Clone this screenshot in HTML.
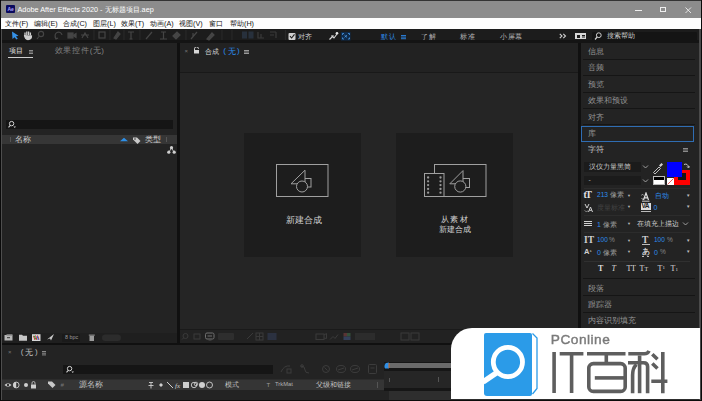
<!DOCTYPE html>
<html><head><meta charset="utf-8">
<style>
*{margin:0;padding:0;box-sizing:border-box}
html,body{width:702px;height:401px;overflow:hidden;background:#101010;font-family:"Liberation Sans",sans-serif;}
.a{position:absolute}
.t{position:absolute;white-space:nowrap;line-height:1}
#title{left:0;top:0;width:702px;height:18px;background:#8c8c8c;border-top:1.5px solid #333}
#menu{left:0;top:18px;width:702px;height:11px;background:#fdfdfd}
#tool{left:2px;top:29px;width:698px;height:14px;background:#1c1c1c}
.panel{position:absolute;background:#232323}
.sep{position:absolute;height:1px;background:#151515}
.ri{position:absolute;left:588px;font-size:7.8px;color:#959595}
</style></head><body>
<!-- window frame -->


<div id="title" class="a">
  <div class="a" style="left:6px;top:4px;width:9px;height:8px;background:#0a0a5e;border-radius:1px"></div>
  <div class="t" style="left:7.5px;top:6px;font-size:5px;color:#b0a8ff;font-weight:bold">Ae</div>
  <div class="t" style="left:17.5px;top:5px;font-size:7.3px;color:#fff">Adobe After Effects 2020 - 无标题项目.aep</div>
  <div class="a" style="left:635px;top:8.5px;width:7px;height:0.9px;background:#eee"></div>
  <div class="a" style="left:660px;top:5.5px;width:6px;height:5.5px;border:0.9px solid #eee"></div>
  <svg class="a" style="left:684.5px;top:5.5px" width="7" height="7"><path d="M0.5 0.5L6 6M6 0.5L0.5 6" stroke="#eee" stroke-width="0.9"/></svg>
</div>
<div id="menu" class="a">
  <div class="t" style="left:5px;top:2px;font-size:7.2px;color:#111">文件(F)</div>
  <div class="t" style="left:34px;top:2px;font-size:7.2px;color:#111">编辑(E)</div>
  <div class="t" style="left:63px;top:2px;font-size:7.2px;color:#111">合成(C)</div>
  <div class="t" style="left:93px;top:2px;font-size:7.2px;color:#111">图层(L)</div>
  <div class="t" style="left:121px;top:2px;font-size:7.2px;color:#111">效果(T)</div>
  <div class="t" style="left:150px;top:2px;font-size:7.2px;color:#111">动画(A)</div>
  <div class="t" style="left:179px;top:2px;font-size:7.2px;color:#111">视图(V)</div>
  <div class="t" style="left:209px;top:2px;font-size:7.2px;color:#111">窗口</div>
  <div class="t" style="left:230px;top:2px;font-size:7.2px;color:#111">帮助(H)</div>
</div>
<div id="tool" class="a"></div>
<div class="a" style="left:2px;top:40px;width:698px;height:3px;background:#141414"></div>
<!-- toolbar icons -->
<svg class="a" style="left:0;top:29px" width="290" height="12">
  <path d="M12 2.5 L12.5 10 L14.5 8.3 L16.5 10.5 L17.8 9.5 L15.8 7.5 L18.5 6.8 Z" fill="#3592e8"/>
  <path d="M25 6 L25 3.5 M26.8 6 L26.8 2.5 M28.6 6 L28.6 2.5 M30.4 6.5 L30.4 3.5 M24.5 6 Q25 10.5 28 10.5 Q31.5 10.5 31.5 6.5" stroke="#cfcfcf" stroke-width="1.3" fill="#cfcfcf"/>
  <g stroke="#454545" fill="none" stroke-width="1.2">
    <circle cx="41" cy="5" r="2.6"/><path d="M39 7.5L37 10"/>
    <path d="M56 9 A3.5 3.5 0 1 1 62 6"/><path d="M55 8l1 2 2-1"/>
    <rect x="68" y="4" width="5" height="5" fill="#454545"/><path d="M73 6.5L76 4.5V8.5Z" fill="#454545"/>
    <path d="M82 9 L85 4 L88 9 M81 6h8"/>
    <path d="M94 1v10" stroke="#282828"/>
    <rect x="99" y="3" width="6" height="6"/>
    <path d="M110 1v10" stroke="#282828"/>
    <path d="M114 9 L118 3 L120 5 L116 10Z" fill="#454545"/>
    <path d="M124 1v10" stroke="#282828"/>
    <path d="M128 3h6 M131 3v7 M129.5 10h3"/>
    <path d="M140 1v10" stroke="#282828"/>
    <path d="M146 10 L152 3"/>
    <path d="M160 10h7 M163.5 3v7 M161 3h5"/>
    <path d="M173 7 L177 3 L180 6 L176 10Z" fill="#454545"/>
    <path d="M186 1v10" stroke="#282828"/>
    <path d="M191 10 L197 3 M193 4v3"/>
    <path d="M207 10 L212 4 L214 6 L209 11Z" fill="#454545"/>
    <path d="M222 1v10" stroke="#282828"/>
    <path d="M232 1v10" stroke="#282828"/>
    <rect x="242" y="2.5" width="5" height="7" fill="#27303c" stroke="none"/><rect x="248.5" y="2.5" width="5" height="7" fill="#27303c" stroke="none"/>
    <path d="M258 3v6h6M261 5v4" stroke="#3a3a3a"/>
    <path d="M270 3h6M276 3v6M270 6h4" stroke="#3a3a3a"/>
    <path d="M285.5 1v10" stroke="#282828"/>
  </g>
</svg>
<svg class="a" style="left:286px;top:29px" width="70" height="12">
  <rect x="2.5" y="4" width="7" height="7" rx="1" fill="#d0d0d0"/>
  <path d="M4 7.2 L5.6 9 L8.5 5.3" stroke="#1c1c1c" stroke-width="1.1" fill="none"/>
  <path d="M43.5 10.5 L47.5 6.5 M45.5 6.5 L48 9 L51 5" stroke="#d8d8d8" stroke-width="1.1" fill="none"/><circle cx="51" cy="4.3" r="1.3" fill="#e8e8e8"/>
  <rect x="55" y="3" width="9.5" height="8.5" fill="#0f2a4a"/>
  <path d="M56.5 6V4.5H58M62 4.5h1.5V6M56.5 8.5V10H58M62 10h1.5V8.5M58.5 6.2l2.5 2.2M61 6.2l-2.5 2.2" fill="none" stroke="#4a9ae8" stroke-width="0.8"/>
</svg>
<div class="t" style="left:297.5px;top:33px;font-size:7.4px;color:#c8c8c8">对齐</div>
<div class="t" style="left:381px;top:32.5px;font-size:7.3px;color:#2d8ceb;letter-spacing:1.3px">默认</div>
<div class="a" style="left:401px;top:34.5px;width:5px;height:0.9px;background:#2a7ad0;box-shadow:0 1.6px 0 #2a7ad0,0 3.2px 0 #2a7ad0"></div>
<div class="t" style="left:420.5px;top:32.5px;font-size:7.4px;color:#b4b4b4;letter-spacing:1.3px">了解</div>
<div class="t" style="left:460px;top:32.5px;font-size:7.4px;color:#b4b4b4;letter-spacing:1.3px">标准</div>
<div class="t" style="left:500px;top:32.5px;font-size:7.4px;color:#b4b4b4;letter-spacing:0.6px">小屏幕</div>
<svg class="a" style="left:559px;top:33px" width="8" height="6"><path d="M0.8 0.8L3 3L0.8 5.2M4.3 0.8L6.5 3L4.3 5.2" stroke="#d0d0d0" stroke-width="1.1" fill="none"/></svg>
<div class="a" style="left:575px;top:33px;width:11px;height:6px;background:#d8d8d8"></div>
<div class="a" style="left:577px;top:34.5px;width:3px;height:3px;background:#1c1c1c"></div>
<div class="a" style="left:582px;top:35px;width:3px;height:1px;background:#1c1c1c;box-shadow:0 1.5px 0 #1c1c1c"></div>
<div class="a" style="left:592px;top:31.5px;width:105px;height:9px;background:#141414;border-radius:1px"></div>
<svg class="a" style="left:593px;top:31px" width="10" height="10"><circle cx="5.8" cy="4.2" r="2.4" stroke="#cfcfcf" stroke-width="1" fill="none"/><path d="M4.2 6L2 8.5" stroke="#cfcfcf" stroke-width="1.2"/></svg>
<div class="t" style="left:607px;top:32.5px;font-size:6.6px;color:#cfcfcf">搜索帮助</div>


<!-- project panel -->
<div class="panel" style="left:2px;top:43px;width:175px;height:300px;background:#232323"></div>
<div class="t" style="left:9.3px;top:46.8px;font-size:7.4px;color:#e0e0e0;letter-spacing:0.2px">项目</div>
<div class="a" style="left:29px;top:49.5px;width:4px;height:1px;background:#8a8a8a;box-shadow:0 1.5px 0 #8a8a8a,0 3px 0 #8a8a8a"></div>
<div class="a" style="left:8px;top:56.5px;width:25px;height:1.2px;background:#cfcfcf"></div>
<div class="t" style="left:54.5px;top:47.3px;font-size:7.5px;color:#808080;letter-spacing:0.85px">效果控件</div><div class="t" style="left:89.7px;top:47px;font-size:8px;color:#808080">(</div><div class="t" style="left:93px;top:47.3px;font-size:7.5px;color:#808080">无</div><div class="t" style="left:101.3px;top:47px;font-size:8px;color:#808080">)</div>
<div class="a" style="left:6px;top:119.7px;width:167px;height:9px;background:#151515"></div>
<svg class="a" style="left:7px;top:120px" width="10" height="9"><circle cx="4.6" cy="3.6" r="2.2" stroke="#d0d0d0" stroke-width="1" fill="none"/><path d="M3.3 5.3L1.5 7.3" stroke="#d0d0d0" stroke-width="1.1"/><path d="M6.5 6.6h2.5l-1.25 1.3z" fill="#d0d0d0"/></svg>
<div class="a" style="left:2px;top:135px;width:175px;height:9px;background:#363636"></div>
<div class="t" style="left:15px;top:136px;font-size:7.6px;color:#d0d0d0">名称</div>
<div class="a" style="left:10px;top:137px;width:1px;height:5px;background:#555"></div>
<svg class="a" style="left:119px;top:136px" width="50" height="8"><path d="M1 5.3 L5 1.8 L9 5.3 Z" fill="#2e8fe6"/><path d="M14 1.5 L18 1.5 L21.5 5 L18.5 8 L14 3.5Z" fill="#c9c9c9"/><circle cx="16" cy="3" r="0.8" fill="#363636"/></svg>
<div class="t" style="left:144.5px;top:136px;font-size:7.6px;color:#d0d0d0">类型</div>
<div class="a" style="left:165.5px;top:137px;width:1px;height:5px;background:#555"></div>
<svg class="a" style="left:167px;top:146px" width="9" height="8"><circle cx="4.5" cy="1.7" r="1.6" fill="#cfcfcf"/><circle cx="1.8" cy="6.2" r="1.6" fill="#cfcfcf"/><circle cx="7.2" cy="6.2" r="1.6" fill="#cfcfcf"/><path d="M4.5 2L2 6M4.5 2L7 6" stroke="#cfcfcf" stroke-width="0.8"/></svg>
<!-- project bottom bar -->
<div class="a" style="left:2px;top:332.5px;width:175px;height:10px;background:#1f1f1f"></div>
<svg class="a" style="left:2px;top:333px" width="120" height="9">
  <rect x="2.5" y="2" width="8" height="5.5" fill="#b8b8b8"/><rect x="4.5" y="1" width="6" height="1.5" fill="#777"/><path d="M5 4.7h3" stroke="#333" stroke-width="1"/>
  <path d="M17 1.8h3l1 1h4v5h-8z" fill="#c6c6c6"/>
  <rect x="30" y="1.2" width="8.5" height="6.8" fill="#d8d8d8"/><path d="M31.5 3L33 7M33.5 2.5L35 7M35.5 2.5L37 6.5" stroke="#d02a2a" stroke-width="1"/><path d="M32 2.5L34 6.5" stroke="#2ab04a" stroke-width="1"/><path d="M35 3L36.5 7" stroke="#2a6ad0" stroke-width="1"/>
  <path d="M45 6.5 L52 1 L49 7.5 L48 5.5Z" fill="#c9c9c9"/>
  <rect x="87.5" y="2.8" width="4.5" height="5.2" fill="#9a9a9a"/><rect x="86.8" y="1.6" width="6" height="1" fill="#9a9a9a"/>
  <rect x="100" y="1.5" width="19" height="6.5" rx="3.2" fill="#2c2c2c"/>
</svg>
<div class="a" style="left:62px;top:333.5px;width:18px;height:8px;background:#1a1a1a;border-radius:1px"></div><div class="t" style="left:65px;top:335.3px;font-size:5.4px;color:#9a9a9a">8 bpc</div>

<!-- comp panel -->
<div class="panel" style="left:180px;top:43px;width:398px;height:300px;background:#252525"></div>
<div class="a" style="left:180px;top:43px;width:398px;height:28.5px;background:#222"></div>
<div class="a" style="left:180px;top:71.5px;width:398px;height:1px;background:#191919"></div>
<div class="t" style="left:184.5px;top:48px;font-size:6px;color:#777">×</div>
<svg class="a" style="left:193px;top:47px" width="7" height="7"><path d="M1.5 3V1.8A2 2 0 0 1 5.5 1.8" stroke="#d6d6d6" stroke-width="1" fill="none"/><rect x="1" y="3" width="5" height="3.5" fill="#d6d6d6"/></svg>
<div class="t" style="left:204.5px;top:47.5px;font-size:7.2px;color:#dcdcdc">合成</div>
<div class="t" style="left:223.2px;top:47px;font-size:8px;color:#2d8ceb">(</div><div class="t" style="left:228px;top:47.5px;font-size:7.6px;color:#2d8ceb">无</div><div class="t" style="left:237px;top:47px;font-size:8px;color:#2d8ceb">)</div>
<div class="a" style="left:244px;top:49.5px;width:5px;height:1px;background:#9a9a9a;box-shadow:0 1.5px 0 #9a9a9a,0 3px 0 #9a9a9a"></div>
<!-- comp cards -->
<div class="a" style="left:244px;top:132.5px;width:117px;height:124.5px;background:#1d1d1d"></div>
<div class="a" style="left:396px;top:132.5px;width:117px;height:124.5px;background:#1d1d1d"></div>
<svg class="a" style="left:243px;top:132px" width="118" height="125" stroke="#a0a0a0" stroke-width="1" fill="#1d1d1d">
  <rect x="33.5" y="32.5" width="51.5" height="32" fill="none"/>
  <rect x="59.5" y="46.5" width="8.5" height="8.5"/>
  <path d="M48 51.8 L62 38.2 L62 51.8 Z"/>
  <circle cx="59" cy="54.5" r="5.5"/>
</svg>
<div class="t" style="left:285.5px;top:216px;font-size:8.5px;color:#d2d2d2">新建合成</div>
<svg class="a" style="left:397px;top:132px" width="118" height="125" stroke="#a0a0a0" stroke-width="1" fill="#1d1d1d">
  <rect x="37.5" y="32.5" width="51.5" height="32" fill="none"/>
  <rect x="27.5" y="41.5" width="19.5" height="23"/>
  <g fill="#999" stroke="none"><circle cx="31.1" cy="45.5" r="1.15"/><circle cx="31.1" cy="49.3" r="1.15"/><circle cx="31.1" cy="53.1" r="1.15"/><circle cx="31.1" cy="56.9" r="1.15"/><circle cx="31.1" cy="60.7" r="1.15"/>
  <circle cx="43.5" cy="45.5" r="1.15"/><circle cx="43.5" cy="49.3" r="1.15"/><circle cx="43.5" cy="53.1" r="1.15"/><circle cx="43.5" cy="56.9" r="1.15"/><circle cx="43.5" cy="60.7" r="1.15"/></g>
    <rect x="63.5" y="46.5" width="9" height="9"/>
  <path d="M52.8 51.8 L66 38.6 L66 51.8 Z"/>
  <circle cx="63.3" cy="54.5" r="5.6"/>
</svg>
<div class="t" style="left:441px;top:215px;font-size:8.3px;color:#d2d2d2;letter-spacing:1.4px">从素材</div>
<div class="t" style="left:438.5px;top:224.5px;font-size:8.3px;color:#d2d2d2">新建合成</div>
<!-- comp bottom bar -->
<div class="a" style="left:180px;top:329px;width:398px;height:1px;background:#1a1a1a"></div>
<div class="a" style="left:180px;top:330px;width:398px;height:12.5px;background:#222"></div>
<svg class="a" style="left:180px;top:330px" width="398" height="13" fill="none" stroke="#3a3a3a" stroke-width="1">
  <circle cx="5.5" cy="6" r="2.5"/><path d="M3.5 8L2 9.5"/>
  <rect x="14" y="4" width="6" height="5"/>
  <rect x="25.5" y="3" width="8.5" height="6" rx="1.5" stroke="#707070"/><path d="M27.5 6h4.5" stroke="#707070"/><path d="M28.5 10h3" stroke="#505050"/>
  <rect x="38" y="3" width="16" height="7" rx="1" fill="#2e2e2e" stroke="none"/>
  <path d="M67 9L73 3"/>
  <rect x="76" y="3" width="7" height="7"/><path d="M79.5 3v7M76 6.5h7"/>
  <rect x="87.5" y="3" width="9" height="7" fill="#2b3140" stroke="none"/>
  <rect x="136" y="4" width="8" height="5.5"/><path d="M144 5l2.5-1.5v5L144 8"/>
  <path d="M150 9.5l3-3 2 2 3-4" />
  <rect x="163.5" y="3" width="3.5" height="3.5" fill="#5a3434" stroke="none"/><rect x="167" y="3" width="3.5" height="3.5" fill="#34503a" stroke="none"/><rect x="163.5" y="6.5" width="7" height="3.5" fill="#34405a" stroke="none"/>
  <rect x="175" y="3" width="20" height="7" fill="#2c2c2c" stroke="none"/>
  <rect x="221" y="3" width="8" height="7"/><rect x="231" y="3" width="8" height="7"/>
</svg>

<!-- right panel -->
<div class="panel" style="left:581px;top:43px;width:118px;height:300px;background:#232323"></div>
<div class="ri t" style="top:47.5px">信息</div>
<div class="sep" style="left:583px;top:58.5px;width:112px"></div>
<div class="ri t" style="top:64px">音频</div>
<div class="sep" style="left:583px;top:75px;width:112px"></div>
<div class="ri t" style="top:80.5px">预览</div>
<div class="sep" style="left:583px;top:91.5px;width:112px"></div>
<div class="ri t" style="top:97px">效果和预设</div>
<div class="sep" style="left:583px;top:108px;width:112px"></div>
<div class="ri t" style="top:113.5px">对齐</div>
<div class="sep" style="left:583px;top:124px;width:112px"></div>
<div class="a" style="left:580.5px;top:125.5px;width:113px;height:16px;border:1px solid #2f6db3"></div>
<div class="ri t" style="top:130px">库</div>
<div class="ri t" style="top:146px;color:#c6c6c6">字符</div>
<div class="a" style="left:682.5px;top:148px;width:5px;height:1px;background:#8a8a8a;box-shadow:0 1.5px 0 #8a8a8a,0 3px 0 #8a8a8a"></div>
<!-- char panel -->
<div class="a" style="left:584px;top:162px;width:57px;height:10px;background:#1b1b1b"></div>
<div class="t" style="left:589px;top:163.5px;font-size:7.1px;color:#d0d0d0">汉仪力量黑简</div>
<svg class="a" style="left:642px;top:164px" width="7" height="5"><path d="M1 1.5L3.5 4L6 1.5" stroke="#aaa" stroke-width="0.9" fill="none"/></svg>
<div class="a" style="left:584px;top:176px;width:57px;height:9px;background:#1b1b1b"></div>
<div class="t" style="left:588.5px;top:176px;font-size:7px;color:#aaa">-</div>
<svg class="a" style="left:642px;top:178px" width="7" height="5"><path d="M1 1.5L3.5 4L6 1.5" stroke="#aaa" stroke-width="0.9" fill="none"/></svg>
<svg class="a" style="left:652px;top:162px" width="12" height="12"><path d="M1.5 10.5 L7 5 L8.5 6.5 L3 12Z" stroke="#cfcfcf" stroke-width="0.9" fill="none"/><path d="M7 3.5 L9.5 1 L11 2.5 L8.5 5Z" fill="#cfcfcf"/></svg>
<div class="a" style="left:653px;top:175.5px;width:11.5px;height:9px;background:#fff;border:1px solid #bbb"></div>
<div class="a" style="left:654px;top:176.5px;width:9.5px;height:3px;background:#000"></div>
<div class="a" style="left:674px;top:169.5px;width:15.8px;height:15.3px;background:#f00"></div>
<div class="a" style="left:677.5px;top:172.5px;width:8.3px;height:7.3px;background:#151515"></div>
<div class="a" style="left:667px;top:161.7px;width:15.2px;height:15.3px;background:#00f"></div>
<svg class="a" style="left:683px;top:162px" width="7" height="7"><path d="M1 2.5 Q4.5 1 5.5 5" stroke="#ddd" stroke-width="0.9" fill="none"/><path d="M4 4.5 L5.5 6 L6.8 4.3" stroke="#ddd" stroke-width="0.8" fill="none"/></svg>
<div class="a" style="left:667px;top:178px;width:6.5px;height:6.5px;background:#fff"></div>
<svg class="a" style="left:667px;top:178px" width="7" height="7"><path d="M0.5 6.5L6.5 0.5" stroke="#d33" stroke-width="0.8"/></svg>
<!-- rows -->
<div class="sep" style="left:584px;top:188px;width:106px;background:#2c2c2c"></div>
<div class="sep" style="left:584px;top:214.5px;width:106px;background:#2c2c2c"></div>
<div class="t" style="left:583.5px;top:190.5px;font-size:9.5px;color:#e6e6e6;font-family:'Liberation Serif',serif;font-weight:bold;letter-spacing:-1.2px">tT</div>
<div class="t" style="left:597px;top:192px;font-size:6.6px;color:#2d8ceb">213</div>
<div class="t" style="left:609.5px;top:192px;font-size:6.6px;color:#9a9a9a">像素</div>
<div class="t" style="left:627px;top:193.5px;font-size:4px;color:#bbb">▼</div>
<svg class="a" style="left:640.5px;top:192px" width="11" height="10"><path d="M2.5 8 L5 1 L7.5 8 M3.3 5.8h3.4" stroke="#e0e0e0" stroke-width="1.2" fill="none"/><path d="M1 9.2h7.5" stroke="#e0e0e0" stroke-width="0.9"/><path d="M0.5 3.5L1.5 2L2.5 3.5M0.5 6L1.5 7.5L2.5 6" stroke="#bbb" stroke-width="0.7" fill="none"/></svg>
<div class="t" style="left:655px;top:192px;font-size:7px;color:#2d8ceb">自动</div>
<div class="t" style="left:686px;top:193.5px;font-size:4.5px;color:#bbb">▼</div>
<svg class="a" style="left:583.5px;top:202.5px" width="10" height="10"><path d="M1 1L3 5L5 1M4.5 9L6.5 4L8.5 9M5.3 7.3h2.4" stroke="#d0d0d0" stroke-width="1" fill="none"/><path d="M0.5 7.5Q2 9.5 4 8" stroke="#aaa" stroke-width="0.7" fill="none"/></svg>
<div class="t" style="left:597px;top:203.5px;font-size:7px;color:#424242">度量标准</div>
<div class="t" style="left:627px;top:205px;font-size:4px;color:#bbb">▼</div>
<div class="a" style="left:641px;top:202.5px;width:10px;height:7px;background:#ddd"></div>
<div class="t" style="left:641.5px;top:203px;font-size:6.5px;color:#222;font-weight:bold;letter-spacing:-0.5px">VA</div>
<div class="a" style="left:641px;top:210.5px;width:10px;height:1px;background:#bbb"></div>
<div class="t" style="left:653.5px;top:203.5px;font-size:7px;color:#2d8ceb">0</div>
<div class="t" style="left:686px;top:205px;font-size:4.5px;color:#bbb">▼</div>
<div class="a" style="left:584px;top:221px;width:8px;height:1.2px;background:#d0d0d0;box-shadow:0 2px 0 #d0d0d0,0 4px 0 #d0d0d0"></div>
<div class="t" style="left:597px;top:220.5px;font-size:7px;color:#2d8ceb">1</div>
<div class="t" style="left:603px;top:220.5px;font-size:7px;color:#9a9a9a">像素</div>
<div class="t" style="left:627px;top:222px;font-size:4px;color:#bbb">▼</div>
<div class="t" style="left:636.5px;top:220px;font-size:7.2px;letter-spacing:0.1px;color:#d0d0d0">在填充上描边</div>
<svg class="a" style="left:682px;top:221px" width="7" height="5"><path d="M1 1.5L3.5 4L6 1.5" stroke="#aaa" stroke-width="0.9" fill="none"/></svg>
<div class="sep" style="left:584px;top:231.5px;width:106px;background:#2c2c2c"></div>
<div class="t" style="left:584px;top:235.5px;font-size:9.5px;color:#d0d0d0;font-family:'Liberation Serif',serif;font-weight:bold">IT</div>
<div class="t" style="left:597px;top:237px;font-size:6.5px;color:#2d8ceb">100</div>
<div class="t" style="left:609px;top:237px;font-size:6.5px;color:#888">%</div>
<div class="t" style="left:627px;top:238.5px;font-size:4px;color:#bbb">▼</div>
<div class="t" style="left:642px;top:235.5px;font-size:9.5px;color:#d0d0d0;font-family:'Liberation Serif',serif;font-weight:bold">T</div>
<div class="a" style="left:642px;top:244px;width:8px;height:1px;background:#bbb"></div>
<div class="t" style="left:654px;top:237px;font-size:6.5px;color:#2d8ceb">100</div>
<div class="t" style="left:667px;top:237px;font-size:6.5px;color:#888">%</div>
<div class="t" style="left:686px;top:238.5px;font-size:4.5px;color:#bbb">▼</div>
<div class="t" style="left:584px;top:248px;font-size:7.5px;color:#cfcfcf;font-weight:bold">A<span style="font-size:5px">ª</span></div>
<div class="t" style="left:597px;top:248.5px;font-size:7px;color:#2d8ceb">0</div>
<div class="t" style="left:603px;top:248.5px;font-size:7px;color:#9a9a9a">像素</div>
<div class="t" style="left:627px;top:250px;font-size:4px;color:#bbb">▼</div>
<div class="t" style="left:642px;top:247.5px;font-size:7.5px;color:#cfcfcf;font-weight:bold">あ</div>
<div class="a" style="left:642px;top:255.5px;width:2px;height:1px;background:#bbb;box-shadow:5px 0 0 #bbb"></div>
<div class="t" style="left:654px;top:248.5px;font-size:7px;color:#2d8ceb">0</div>
<div class="t" style="left:660px;top:248.5px;font-size:6.5px;color:#888">%</div>
<div class="t" style="left:686px;top:250px;font-size:4.5px;color:#bbb">▼</div>
<div class="sep" style="left:584px;top:260.5px;width:106px;background:#303030"></div>
<div class="t" style="left:598px;top:265px;font-size:8px;color:#dcdcdc;font-family:'Liberation Serif',serif;font-weight:bold">T</div>
<div class="t" style="left:611.5px;top:265px;font-size:8px;color:#dcdcdc;font-family:'Liberation Serif',serif;font-style:italic">T</div>
<div class="t" style="left:626.5px;top:265px;font-size:8px;color:#dcdcdc;font-family:'Liberation Serif',serif;letter-spacing:-0.5px">TT</div>
<div class="t" style="left:639.5px;top:265px;font-size:8px;color:#dcdcdc;font-family:'Liberation Serif',serif">T<span style="font-size:6px">T</span></div>
<div class="t" style="left:657.5px;top:265px;font-size:8px;color:#dcdcdc;font-family:'Liberation Serif',serif">T<span style="font-size:5px;vertical-align:top">1</span></div>
<div class="t" style="left:670.5px;top:265px;font-size:8px;color:#dcdcdc;font-family:'Liberation Serif',serif">T<span style="font-size:5px">1</span></div>
<div class="sep" style="left:583px;top:278px;width:112px"></div>
<div class="ri t" style="top:284.5px">段落</div>
<div class="sep" style="left:583px;top:295px;width:112px"></div>
<div class="ri t" style="top:300.5px">跟踪器</div>
<div class="sep" style="left:583px;top:311.5px;width:112px"></div>
<div class="ri t" style="top:316.5px">内容识别填充</div>

<!-- timeline -->
<div class="panel" style="left:2px;top:345px;width:698px;height:55px;background:#232323"></div>
<div class="t" style="left:8px;top:349px;font-size:6px;color:#777">×</div>
<div class="t" style="left:20.8px;top:347.8px;font-size:8px;color:#b8b8b8">(</div><div class="t" style="left:25px;top:348px;font-size:8.4px;color:#c0c0c0">无</div><div class="t" style="left:35px;top:347.8px;font-size:8px;color:#b8b8b8">)</div>
<div class="a" style="left:41.8px;top:350.5px;width:4.5px;height:1px;background:#8a8a8a;box-shadow:0 1.7px 0 #8a8a8a,0 3.4px 0 #8a8a8a"></div>
<div class="a" style="left:62.5px;top:365px;width:210.5px;height:9px;background:#151515"></div>
<svg class="a" style="left:65px;top:365px" width="10" height="9"><circle cx="4.6" cy="3.6" r="2.2" stroke="#d0d0d0" stroke-width="1" fill="none"/><path d="M3.3 5.3L1.5 7.3" stroke="#d0d0d0" stroke-width="1.1"/><path d="M6.5 6.6h2.5l-1.25 1.3z" fill="#d0d0d0"/></svg>
<svg class="a" style="left:278px;top:362px" width="102" height="14" fill="none" stroke="#3c3c3c" stroke-width="1">
  <path d="M3 10 Q6 3 12 4"/><rect x="9" y="7" width="4" height="4"/>
  <path d="M23 4 Q27 4 27 8 Q27 11 31 11"/><circle cx="24" cy="4" r="1.3"/>
  <circle cx="48" cy="7" r="3.5"/><path d="M46.5 5.5l3 3"/>
  <ellipse cx="63" cy="7" rx="4.5" ry="3.5"/><path d="M60 8l6-2"/>
  <ellipse cx="77" cy="7" rx="4.5" ry="3.5"/><path d="M74 8l6-2"/>
  <rect x="90.5" y="2.5" width="8" height="9" rx="1"/><path d="M92.5 6h4"/>
</svg>
<div class="a" style="left:2px;top:378.5px;width:382px;height:1px;background:#2c2c2c"></div>
<div class="a" style="left:2px;top:379.5px;width:382px;height:10.5px;background:#353535"></div>
<svg class="a" style="left:2px;top:380px" width="60" height="10">
  <path d="M2.5 5 Q6 1.5 9.5 5 Q6 8.5 2.5 5Z" fill="#d0d0d0"/><circle cx="6" cy="5" r="1.2" fill="#353535"/>
  <circle cx="14.2" cy="5" r="2.9" fill="none" stroke="#d0d0d0" stroke-width="0.9"/><path d="M14.2 2.1A2.9 2.9 0 0 0 14.2 7.9Z" fill="#d0d0d0"/>
  <circle cx="24" cy="5" r="2" fill="#d0d0d0"/>
  <rect x="29" y="4.5" width="5" height="4" fill="#d0d0d0"/><path d="M30 4.5V3A1.5 1.5 0 0 1 33 3V4.5" stroke="#d0d0d0" fill="none" stroke-width="0.8"/>
  <path d="M46 1.5 L50 1.5 L53.5 5 L50.5 8 L46 3.5Z" fill="#c9c9c9"/>
</svg>
<div class="t" style="left:60.5px;top:381.5px;font-size:6px;color:#777;font-style:italic">#</div>
<div class="t" style="left:78.5px;top:381px;font-size:7.6px;color:#c8c8c8">源名称</div>
<svg class="a" style="left:146px;top:380px" width="70" height="10" fill="#cfcfcf" stroke="#cfcfcf">
  <path d="M3 2.5h4M5 2.5v6M2.5 5.5h5" stroke-width="0.9" fill="none"/>
  <path d="M13 5 L15 3 L17 5 L15 7Z" stroke="none"/>
  <path d="M21 2 L27 8" stroke-width="1"/>
  <text x="29" y="8" font-size="7" font-style="italic" stroke="none" font-family="Liberation Serif">fx</text>
  <rect x="37" y="2" width="6" height="6" stroke="none"/>
  <circle cx="48" cy="5" r="2.7" fill="none" stroke-width="0.9"/><circle cx="50" cy="4" r="1.8" fill="none" stroke-width="0.8"/>
  <circle cx="56" cy="5" r="3" stroke="none"/>
  <circle cx="63.5" cy="5" r="3" fill="none" stroke-width="0.9"/>
</svg>
<div class="t" style="left:225px;top:381px;font-size:7.3px;color:#c8c8c8">模式</div>
<div class="t" style="left:266.5px;top:381.5px;font-size:6px;color:#999">T</div>
<div class="t" style="left:275px;top:382px;font-size:5.8px;color:#b0b0b0">TrkMat</div>
<div class="t" style="left:316px;top:381px;font-size:7.3px;color:#c8c8c8">父级和链接</div>
<div class="a" style="left:376.5px;top:382px;width:1px;height:6px;background:#555"></div>
<!-- timeline right -->
<div class="a" style="left:384px;top:345px;width:316px;height:55px;background:#232323"></div>
<div class="a" style="left:384px;top:361.5px;width:316px;height:1.5px;background:#161616"></div>
<div class="a" style="left:389px;top:363px;width:311px;height:5px;background:#6a6a6a"></div>
<div class="a" style="left:384px;top:368px;width:316px;height:3px;background:#161616"></div>
<div class="a" style="left:384px;top:371px;width:316px;height:17px;background:#262626"></div>
<div class="a" style="left:384px;top:388px;width:316px;height:3px;background:#161616"></div>
<div class="a" style="left:389px;top:391px;width:311px;height:9px;background:#2e2e2e"></div>
<svg class="a" style="left:383px;top:362px" width="8" height="7"><path d="M6 0.5 L6 6.5 L2 6.5 Q0.5 3.5 3 1Z" fill="#2e8fe6"/><rect x="5.5" y="1" width="1" height="5" fill="#c76a2a"/></svg>
<div class="a" style="left:388.5px;top:378px;width:1px;height:4px;background:#555"></div>
<div class="a" style="left:437.5px;top:377px;width:1px;height:5px;background:#555"></div>
<!-- bottom window border -->
<div class="a" style="left:0;top:399.5px;width:702px;height:1.5px;background:#0c0c0c"></div>

<!-- window border -->
<div class="a" style="left:0;top:0;width:1px;height:401px;background:#0a0a0a"></div>
<div class="a" style="left:1px;top:29px;width:1.2px;height:371px;background:#4e4e4e"></div>
<div class="a" style="left:699px;top:29px;width:1.5px;height:371px;background:#4a4a4a"></div>
<div class="a" style="left:700.5px;top:0;width:1.5px;height:401px;background:#0a0a0a"></div>
<!-- watermark -->
<div class="a" style="left:451px;top:328px;width:248.8px;height:71px;background:#fff;border-top-left-radius:21px"></div>
<div class="a" style="left:484px;top:333px;width:48px;height:62.5px;background:#2b9be8;border-radius:2px 2px 2px 3px"></div>
<svg class="a" style="left:451px;top:328px" width="250" height="72">
  <path d="M81.5 5.5 L86 10 V60.5 L81.5 66" stroke="#2b9be8" stroke-width="1.3" fill="none"/>
  <circle cx="56.9" cy="34" r="14.6" stroke="#fff" stroke-width="4.8" fill="none"/>
  <path d="M46 44.5 L32 54" stroke="#fff" stroke-width="5.6" stroke-linecap="butt"/>
  <g stroke="#5e5e5e" stroke-width="3.6" fill="none">
    <path d="M103.1 24 V65"/>
    <path d="M108.7 25.8 H132.4 M120.6 24 V65"/>
    <path d="M136 25.7 H174.5 M155.3 27.5 V34"/>
    <rect x="137.8" y="35.6" width="36.4" height="27.8" rx="4.5"/>
    <path d="M143.8 49.9 H174.2"/>
    <path d="M177.3 25.8 H193.3 Q196.8 25.8 198 22.8"/>
    <path d="M177 34.7 H192.5 Q196.6 34.7 196.6 38.5 V65.2"/>
    <path d="M188.6 27.5 V65.2"/>
    <path d="M185.5 36.5 Q181.6 40 181.6 47 V65.2"/>
    <path d="M201.3 26.3 L206.5 31.3 M201.3 35.5 L206.5 40.5 M200.3 53.3 H216.4 M211.8 24 V65.2"/>
  </g>
</svg>
<div class="t" style="left:550.8px;top:332.6px;font-size:13.7px;color:#7a7a7a;letter-spacing:0.5px;-webkit-text-stroke:0.4px #7a7a7a;transform:translateZ(0)">PConline</div>
</body></html>
